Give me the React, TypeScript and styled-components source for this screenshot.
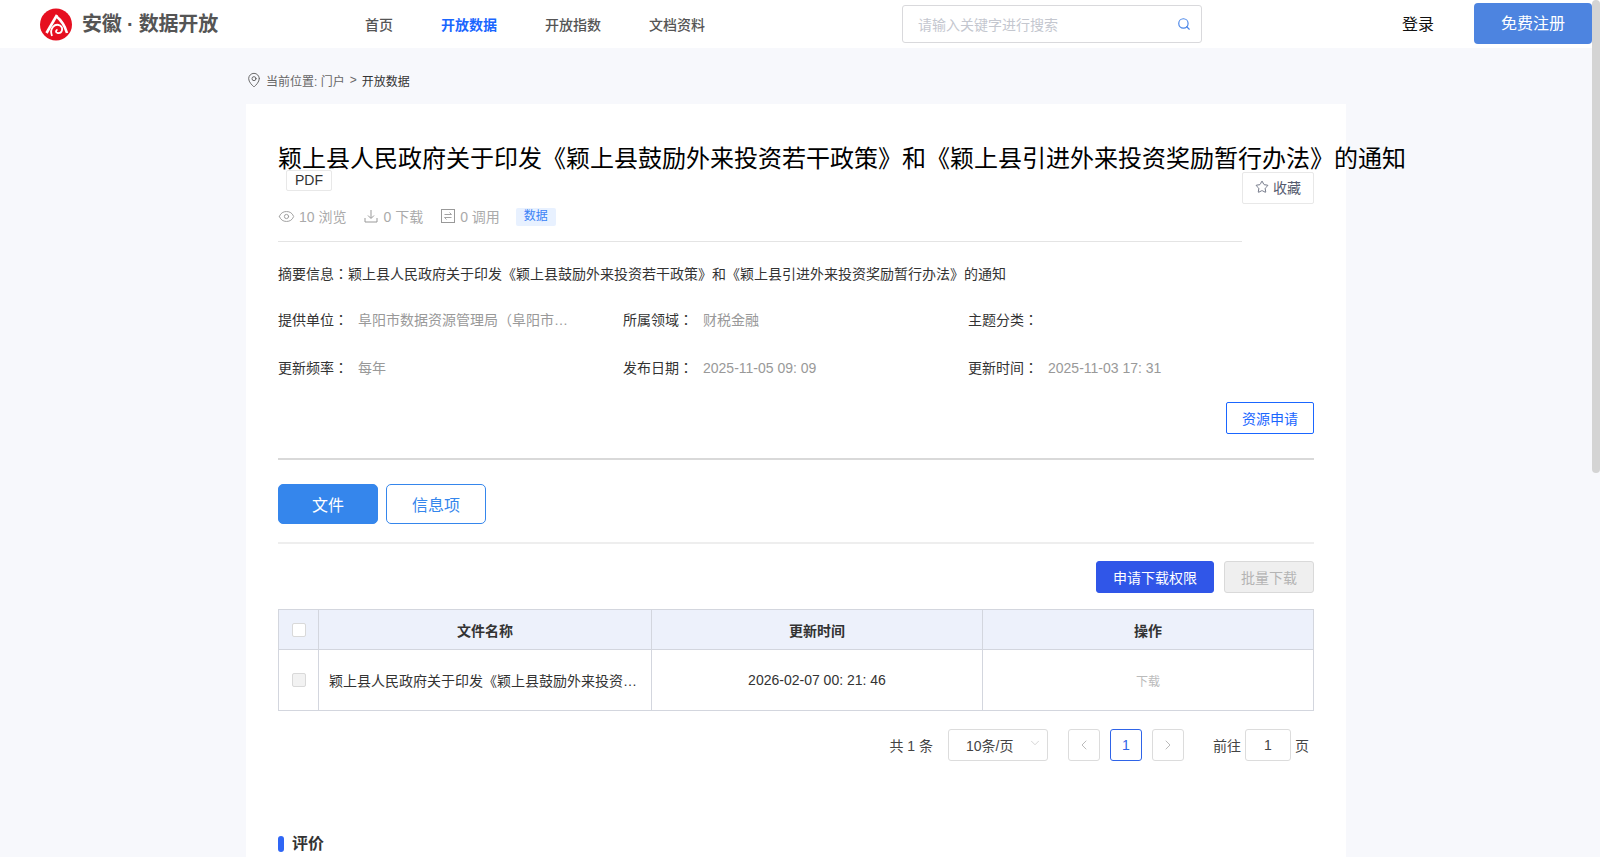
import styled, { createGlobalStyle } from "styled-components";
import { Star, Search, MapPin, Eye, ChevronLeft, ChevronRight, ChevronDown } from "lucide-react";

const GlobalStyle = createGlobalStyle`
  html, body {
    margin: 0;
    padding: 0;
    background: #f7f8fc;
    font-family: "Liberation Sans", "Noto Sans CJK SC", sans-serif;
  }
`;

const ScrollThumb = styled.div`
  position: fixed;
  top: 0;
  right: 0;
  width: 8px;
  height: 473px;
  border-radius: 4px;
  background: #d4d4d4;
`;

const Header = styled.header`
  height: 48px;
  background: #fff;
  display: flex;
  align-items: center;
`;

const Brand = styled.div`
  width: 365px;
  padding-left: 40px;
  box-sizing: border-box;
  display: flex;
  align-items: center;
  gap: 10px;
  flex-shrink: 0;
`;

const BrandName = styled.span`
  font-size: 20px;
  font-weight: 700;
  letter-spacing: -0.2px;
  color: #555;
  white-space: nowrap;
  margin-bottom: 3px;
`;

const Nav = styled.nav`
  display: flex;
  gap: 48px;
  width: 537px;
  flex-shrink: 0;
`;

const NavItem = styled.a<{ $active?: boolean }>`
  font-size: 14px;
  font-weight: ${(p) => (p.$active ? 700 : 500)};
  color: ${(p) => (p.$active ? "#1a66ff" : "#555")};
`;

const SearchBox = styled.div`
  width: 300px;
  height: 38px;
  box-sizing: border-box;
  border: 1px solid #d9d9dc;
  border-radius: 3px;
  padding: 0 10px 1px 15px;
  display: flex;
  align-items: center;
  justify-content: space-between;
  font-size: 14px;
  color: #c4c7cf;
`;

const Login = styled.a`
  margin: 0 0 3px 200px;
  font-size: 16px;
  color: #111;
`;

const Register = styled.button`
  margin: 0 0 1px 40px;
  width: 118px;
  height: 41px;
  border: 0;
  border-radius: 4px;
  padding: 0 0 3px;
  background: #4d84e0;
  color: #fff;
  font: inherit;
  font-size: 16px;
`;

const Main = styled.main`
  width: 1100px;
  margin-left: 246px;
`;

const Crumbs = styled.div`
  height: 56px;
  display: flex;
  align-items: center;
  gap: 5px;
  font-size: 12px;
  color: #666;
  padding-top: 8px;
  box-sizing: border-box;
  svg { color: #555; margin-right: -1px; }
`;

const CrumbNow = styled.span`
  color: #333;
`;

const Panel = styled.section`
  background: #fff;
  padding: 37px 32px 0;
  height: 1400px;
`;

const Title = styled.h1`
  margin: 0;
  font-size: 24px;
  font-weight: 400;
  line-height: 36px;
  color: #000;
  white-space: nowrap;
`;

const HeadRow = styled.div`
  display: flex;
  align-items: flex-start;
`;

const HeadMain = styled.div`
  width: 964px;
  height: 71px;
  border-bottom: 1px solid #e4e4e4;
  flex-shrink: 0;
  margin-top: -7px;
`;

const PdfTag = styled.span`
  display: block;
  width: 46px;
  height: 21px;
  margin-left: 8px;
  box-sizing: border-box;
  border: 1px solid #e8e8e8;
  border-radius: 2px;
  background: #fff;
  font-size: 14px;
  line-height: 19px;
  text-align: center;
  color: #333;
`;

const Meta = styled.div`
  display: flex;
  align-items: center;
  height: 20px;
  margin-top: 15px;
  font-size: 14px;
  color: #aaa;
`;

const MetaItem = styled.span`
  display: flex;
  align-items: center;
  gap: 4px;
  margin-right: 17px;
  svg { color: #999; flex-shrink: 0; }
`;

const DataTag = styled.span`
  width: 40px;
  height: 18px;
  margin: 2px 0 0 -1px;
  border-radius: 2px;
  background: #e8f1ff;
  color: #3b82f6;
  font-size: 12px;
  line-height: 17px;
  text-align: center;
`;

const Collect = styled.button`
  width: 72px;
  height: 32px;
  margin-top: -5px;
  box-sizing: border-box;
  border: 1px solid #e8e8e8;
  border-radius: 2px;
  background: #fff;
  color: #555b6e;
  font: inherit;
  font-size: 14px;
  display: flex;
  align-items: center;
  justify-content: center;
  gap: 4px;
  padding: 0 0 2px;
`;

const Summary = styled.p`
  margin: 21px 0 0;
  font-size: 14px;
  line-height: 20px;
  color: #333;
`;

const Colon = styled.span`
  font-family: "Noto Sans CJK TC", sans-serif;
`;

const InfoGrid = styled.div`
  margin-top: 26px;
  display: grid;
  grid-template-columns: repeat(3, 345px);
  grid-auto-rows: 20px;
  row-gap: 28px;
  font-size: 14px;
`;

const InfoItem = styled.div`
  display: flex;
  color: #333;
  line-height: 20px;
  white-space: nowrap;
`;

const InfoLabel = styled.span`
  width: 80px;
  flex-shrink: 0;
  margin-top: -1px;
`;

const InfoValue = styled.span`
  color: #999;
`;

const ApplyRow = styled.div`
  display: flex;
  justify-content: flex-end;
  margin-top: 24px;
  padding-bottom: 24px;
  border-bottom: 2px solid #d9d9d9;
`;

const OutlineButton = styled.button`
  width: 88px;
  height: 32px;
  border: 1px solid #1a66ff;
  border-radius: 2px;
  background: #fff;
  color: #1a66ff;
  font: inherit;
  font-size: 14px;
  padding: 0;
`;

const Tabs = styled.div`
  display: flex;
  gap: 8px;
  padding: 24px 0 18px;
  border-bottom: 2px solid #eee;
`;

const Tab = styled.button<{ $active?: boolean }>`
  width: 100px;
  height: 40px;
  box-sizing: border-box;
  border: 1px solid #3586ec;
  border-radius: 5px;
  background: ${(p) => (p.$active ? "#3586ec" : "#fff")};
  color: ${(p) => (p.$active ? "#fff" : "#3586ec")};
  font: inherit;
  font-size: 16px;
  padding: 0;
`;

const Actions = styled.div`
  display: flex;
  justify-content: flex-end;
  gap: 10px;
  margin-top: 17px;
`;

const ActionButton = styled.button<{ $disabled?: boolean }>`
  height: 32px;
  box-sizing: border-box;
  padding: 0;
  width: ${(p) => (p.$disabled ? "90px" : "118px")};
  border: 1px solid ${(p) => (p.$disabled ? "#d9d9d9" : "#3056e8")};
  border-radius: 3px;
  background: ${(p) => (p.$disabled ? "#efefef" : "#3056e8")};
  color: ${(p) => (p.$disabled ? "#b4b4b4" : "#fff")};
  font: inherit;
  font-size: 14px;
`;

const FileTable = styled.div`
  margin-top: 16px;
  display: grid;
  grid-template-columns: 40px 333px 331px 331px;
  grid-template-rows: 40px 61px;
  font-size: 14px;
  color: #333;
  border-top: 1px solid #d3d6de;
  border-left: 1px solid #d3d6de;
  width: 1036px;
  box-sizing: border-box;
`;

const Cell = styled.div<{ $head?: boolean; $left?: boolean }>`
  display: flex;
  align-items: center;
  justify-content: ${(p) => (p.$left ? "flex-start" : "center")};
  box-sizing: border-box;
  background: ${(p) => (p.$head ? "#edf1fb" : "#fff")};
  font-weight: ${(p) => (p.$head ? 700 : 400)};
  padding: ${(p) => (p.$left ? "0 10px" : "0")};
  white-space: nowrap;
  border-right: 1px solid #d3d6de;
  border-bottom: 1px solid #d3d6de;
`;

const Check = styled.span<{ $muted?: boolean }>`
  width: 14px;
  height: 14px;
  box-sizing: border-box;
  border: 1px solid #d9d9d9;
  border-radius: 2px;
  background: ${(p) => (p.$muted ? "#f2f2f2" : "#fff")};
`;

const MutedLink = styled.a`
  font-size: 12px;
  color: #bbb;
`;

const Pager = styled.div`
  margin-top: 18px;
  height: 32px;
  display: flex;
  align-items: center;
  justify-content: flex-end;
  font-size: 14px;
  color: #444;
  padding-right: 5px;
`;

const PageSize = styled.div`
  width: 100px;
  height: 32px;
  box-sizing: border-box;
  margin: 0 20px 0 15px;
  padding: 0 5px 0 17px;
  border: 1px solid #dcdcdc;
  border-radius: 3px;
  display: flex;
  align-items: center;
  justify-content: space-between;
  svg { color: #c4c4c4; margin-top: -4px; }
`;

const PageButton = styled.span<{ $current?: boolean }>`
  width: 32px;
  height: 32px;
  box-sizing: border-box;
  margin-right: 10px;
  border: 1px solid ${(p) => (p.$current ? "#2f64e8" : "#dcdcdc")};
  border-radius: 3px;
  color: ${(p) => (p.$current ? "#2f64e8" : "#aaa")};
  display: flex;
  align-items: center;
  justify-content: center;
`;

const JumpInput = styled.span`
  width: 46px;
  height: 32px;
  box-sizing: border-box;
  margin: 0 4px;
  border: 1px solid #dcdcdc;
  border-radius: 3px;
  display: flex;
  align-items: center;
  justify-content: center;
`;

const JumpLabel = styled.span`
  margin-left: 19px;
`;

const SectionTitle = styled.h2`
  margin: 71px 0 0;
  display: flex;
  align-items: center;
  gap: 8px;
  font-size: 16px;
  line-height: 24px;
  color: #333;
`;

const SectionMark = styled.i`
  width: 6px;
  height: 16px;
  border-radius: 3px;
  background: #2f66f5;
`;

const Logo = () => (
  <svg width="32" height="33" viewBox="0 0 32 33" fill="none" stroke="#fff" strokeWidth="2.6">
    <circle cx="16" cy="16.5" r="16" fill="#e60f20" stroke="none" />
    <path d="M17 7 L6.5 25" />
    <path d="M16 8 C21 12 25 18 27 25" />
    <path d="M12 28 C9 20 15 15 20 17.5 C24 20 22 26 17.5 25 C15.5 24.5 15.5 22.5 17.5 21.5" strokeWidth="1.8" />
  </svg>
);

const DownloadIcon = () => (
  <svg width="16" height="16" viewBox="0 0 16 16" fill="none" stroke="currentColor" strokeWidth="1">
    <path d="M8 2v8M5 7.5 8 10.5 11 7.5M2 10v4h12v-4" />
  </svg>
);

const CallIcon = () => (
  <svg width="16" height="16" viewBox="0 0 16 16" fill="none" stroke="currentColor" strokeWidth="1">
    <rect x="1.5" y="1.5" width="13" height="13" />
    <path d="M4.5 6.5h7l-2-2M11.5 9.5h-7l2 2" strokeWidth="0.9" />
  </svg>
);

const fileName = "颖上县人民政府关于印发《颖上县鼓励外来投资若干政策》和《颖上县引进外来投资奖励暂行办法》的通知";

const Label = ({ children }: { children: string }) => (
  <InfoLabel>
    {children}
    <Colon>：</Colon>
  </InfoLabel>
);

export default function App() {
  return (
    <>
      <GlobalStyle />
      <ScrollThumb />
      <Header>
        <Brand>
          <Logo />
          <BrandName>安徽 · 数据开放</BrandName>
        </Brand>
        <Nav>
          <NavItem>首页</NavItem>
          <NavItem $active>开放数据</NavItem>
          <NavItem>开放指数</NavItem>
          <NavItem>文档资料</NavItem>
        </Nav>
        <SearchBox>
          请输入关键字进行搜索
          <Search size={14} color="#4a86e8" />
        </SearchBox>
        <Login>登录</Login>
        <Register>免费注册</Register>
      </Header>
      <Main>
        <Crumbs>
          <MapPin size={16} strokeWidth={1.3} />
          <span>当前位置: 门户</span>
          <span>&gt;</span>
          <CrumbNow>开放数据</CrumbNow>
        </Crumbs>
        <Panel>
          <Title>{fileName}</Title>
          <HeadRow>
            <HeadMain>
              <PdfTag>PDF</PdfTag>
              <Meta>
                <MetaItem>
                  <Eye size={17} strokeWidth={1.3} />
                  10 浏览
                </MetaItem>
                <MetaItem>
                  <DownloadIcon />0 下载
                </MetaItem>
                <MetaItem>
                  <CallIcon />0 调用
                </MetaItem>
                <DataTag>数据</DataTag>
              </Meta>
            </HeadMain>
            <Collect>
              <Star size={14} strokeWidth={1.4} />
              收藏
            </Collect>
          </HeadRow>
          <Summary>
            摘要信息<Colon>：</Colon>
            {fileName}
          </Summary>
          <InfoGrid>
            <InfoItem>
              <Label>提供单位</Label>
              <InfoValue>阜阳市数据资源管理局（阜阳市…</InfoValue>
            </InfoItem>
            <InfoItem>
              <Label>所属领域</Label>
              <InfoValue>财税金融</InfoValue>
            </InfoItem>
            <InfoItem>
              <Label>主题分类</Label>
            </InfoItem>
            <InfoItem>
              <Label>更新频率</Label>
              <InfoValue>每年</InfoValue>
            </InfoItem>
            <InfoItem>
              <Label>发布日期</Label>
              <InfoValue>2025-11-05 09: 09</InfoValue>
            </InfoItem>
            <InfoItem>
              <Label>更新时间</Label>
              <InfoValue>2025-11-03 17: 31</InfoValue>
            </InfoItem>
          </InfoGrid>
          <ApplyRow>
            <OutlineButton>资源申请</OutlineButton>
          </ApplyRow>
          <Tabs>
            <Tab $active>文件</Tab>
            <Tab>信息项</Tab>
          </Tabs>
          <Actions>
            <ActionButton>申请下载权限</ActionButton>
            <ActionButton $disabled>批量下载</ActionButton>
          </Actions>
          <FileTable>
            <Cell $head>
              <Check />
            </Cell>
            <Cell $head>文件名称</Cell>
            <Cell $head>更新时间</Cell>
            <Cell $head>操作</Cell>
            <Cell>
              <Check $muted />
            </Cell>
            <Cell $left>颖上县人民政府关于印发《颖上县鼓励外来投资…</Cell>
            <Cell>2026-02-07 00: 21: 46</Cell>
            <Cell>
              <MutedLink>下载</MutedLink>
            </Cell>
          </FileTable>
          <Pager>
            <span>共 1 条</span>
            <PageSize>
              10条/页
              <ChevronDown size={14} strokeWidth={1.2} />
            </PageSize>
            <PageButton>
              <ChevronLeft size={16} strokeWidth={1.2} />
            </PageButton>
            <PageButton $current>1</PageButton>
            <PageButton>
              <ChevronRight size={16} strokeWidth={1.2} />
            </PageButton>
            <JumpLabel>前往</JumpLabel>
            <JumpInput>1</JumpInput>
            <span>页</span>
          </Pager>
          <SectionTitle>
            <SectionMark />
            评价
          </SectionTitle>
        </Panel>
      </Main>
    </>
  );
}
